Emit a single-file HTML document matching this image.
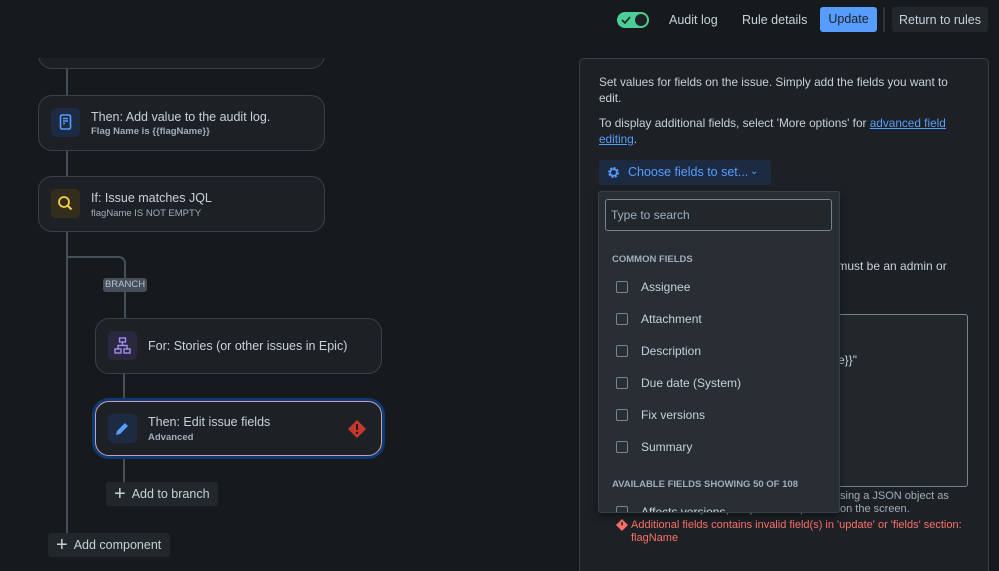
<!DOCTYPE html>
<html><head><style>
*{box-sizing:border-box;margin:0;padding:0}
html,body{width:999px;height:571px;overflow:hidden}
body{background:#161a1d;font-family:"Liberation Sans",sans-serif;color:#c7d1db;position:relative}
.a{position:absolute}
.card{position:absolute;background:#1d2125;border:1px solid #38414a;border-radius:14px}
.ic{position:absolute;left:12px;top:12px;width:29px;height:29px;border-radius:5px}
.t{position:absolute;left:52px;font-size:12.5px;color:#c7d1db;white-space:nowrap}
.s{position:absolute;left:52px;font-size:9.5px;color:#9fadbc;font-weight:bold;white-space:nowrap}
.vl{position:absolute;width:2px;background:#454f59}
.btn{position:absolute;background:#22272b;border-radius:3px;font-size:12.5px;color:#c7d1db;display:flex;align-items:center}
.item{position:absolute;left:17px;font-size:12px;color:#c7d1db;display:flex;align-items:center}
.cb{width:12px;height:12px;border:1.5px solid #738496;border-radius:2px;margin-right:13px}
.p{position:absolute;font-size:12px;color:#c7d1db;white-space:nowrap}
</style></head><body>
<div class="vl" style="left:66px;top:60px;height:485px"></div>
<div class="card" style="left:38px;top:20px;width:287px;height:49px"></div>
<div class="a" style="left:0;top:0;width:560px;height:58px;background:#161a1d"></div>
<div class="card" style="left:38px;top:95px;width:287px;height:56px">
<div class="ic" style="background:#1c2b41"><svg width="29" height="29" viewBox="0 0 29 29"><rect x="9.5" y="7" width="10" height="14" rx="1.5" fill="none" stroke="#579dff" stroke-width="1.6"/><path d="M12 10.5h5M12 13h5M12 15.5h2" stroke="#579dff" stroke-width="1.4"/></svg></div>
<div class="t" style="top:14px">Then: Add value to the audit log.</div>
<div class="s" style="top:30px">Flag Name is {{flagName}}</div></div>
<div class="card" style="left:38px;top:176px;width:287px;height:56px">
<div class="ic" style="background:#332e1b"><svg width="29" height="29" viewBox="0 0 29 29"><circle cx="13" cy="13" r="5" fill="none" stroke="#f5cd47" stroke-width="1.8"/><path d="M16.5 16.5l4 4" stroke="#f5cd47" stroke-width="2"/></svg></div>
<div class="t" style="top:14px">If: Issue matches JQL</div>
<div class="s" style="top:31px;font-weight:normal">flagName IS NOT EMPTY</div></div>
<svg class="a" style="left:66px;top:255px" width="62" height="65"><path d="M1 2H52Q59 2 59 9V65" fill="none" stroke="#454f59" stroke-width="2"/></svg>
<div class="a" style="left:103px;top:278px;width:44px;height:14px;background:#454f59;border-radius:3px;font-size:9.5px;color:#b6c2cf;text-align:center;line-height:14px">BRANCH</div>
<div class="vl" style="left:123px;top:370px;height:115px"></div>
<div class="card" style="left:95px;top:318px;width:287px;height:56px">
<div class="ic" style="background:#2b273f"><svg width="29" height="29" viewBox="0 0 29 29"><g fill="none" stroke="#9f8fef" stroke-width="1.4"><rect x="11.5" y="7" width="6" height="4"/><rect x="7" y="18" width="6" height="4"/><rect x="16" y="18" width="6" height="4"/><path d="M14.5 11v3.5M10 18v-3.5h9V18"/></g></svg></div>
<div class="t" style="top:20px">For: Stories (or other issues in Epic)</div></div>
<div class="card" style="left:95px;top:401px;width:287px;height:55px;border:1px solid #c9a0b0;box-shadow:0 0 0 3px #0c3a75">
<div class="ic" style="background:#1c2b41"><svg width="29" height="29" viewBox="0 0 29 29"><path d="M8 21l1-4 8-8 3 3-8 8z" fill="#579dff"/></svg></div>
<div class="t" style="top:13px">Then: Edit issue fields</div>
<div class="s" style="top:30px">Advanced</div>
<svg class="a" style="left:251px;top:17px" width="20" height="20" viewBox="0 0 20 20"><path d="M10 1l9 9-9 9-9-9z" fill="#c9372c"/><path d="M10 5v6" stroke="#1d2125" stroke-width="2"/><circle cx="10" cy="14" r="1.2" fill="#1d2125"/></svg></div>
<div class="btn" style="left:106px;top:482px;width:112px;height:24px;padding-left:8px"><span style="font-size:20px;margin-right:6px;font-weight:200">+</span>Add to branch</div>
<div class="btn" style="left:48px;top:533px;width:122px;height:24px;padding-left:8px"><span style="font-size:20px;margin-right:6px;font-weight:200">+</span>Add component</div>

<div class="a" style="left:617px;top:12px;width:32px;height:16px;background:#4bce97;border-radius:8px"><div class="a" style="left:18px;top:2px;width:12px;height:12px;border-radius:6px;background:#1d2125"></div><svg class="a" style="left:4px;top:3px" width="10" height="10"><path d="M1 5l3 3 5-6" stroke="#1d2125" stroke-width="1.6" fill="none"/></svg></div>
<div class="p" style="left:669px;top:13px;font-size:12.5px">Audit log</div>
<div class="p" style="left:742px;top:13px;font-size:12.5px">Rule details</div>
<div class="a" style="left:820px;top:7px;width:57px;height:25px;background:#579dff;border-radius:3px;color:#1d2125;font-size:12.5px;text-align:center;line-height:25px">Update</div>
<div class="a" style="left:883px;top:7px;width:2px;height:25px;background:#2c333a"></div>
<div class="btn" style="left:892px;top:7px;width:96px;height:25px;justify-content:center">Return to rules</div>

<div class="a" style="left:579px;top:58px;width:410px;height:530px;background:#1d2125;border:1px solid #38414a;border-radius:5px"></div>
<div class="p" style="left:599px;top:75px;font-size:11.8px">Set values for fields on the issue. Simply add the fields you want to</div>
<div class="p" style="left:599px;top:91px;font-size:11.8px">edit.</div>
<div class="p" style="left:599px;top:116px;font-size:11.8px">To display additional fields, select 'More options' for <span style="color:#579dff;text-decoration:underline">advanced field</span></div>
<div class="p" style="left:599px;top:132px;font-size:11.8px"><span style="color:#579dff;text-decoration:underline">editing</span>.</div>
<div class="a" style="left:599px;top:160px;width:172px;height:25px;background:#1c2b41;border-radius:3px;color:#579dff;font-size:12.5px;line-height:25px;padding-left:29px">Choose fields to set...<span style="position:absolute;left:151px;top:-1px;font-size:10px">&#8964;</span>
<svg class="a" style="left:7px;top:5px" width="15" height="15" viewBox="0 0 16 16"><circle cx="8" cy="8" r="4.5" fill="none" stroke="#579dff" stroke-width="2.5" stroke-dasharray="2.2 1.3"/><circle cx="8" cy="8" r="3.5" fill="none" stroke="#579dff" stroke-width="1.6"/></svg></div>
<div class="p" style="left:830px;top:259px">r must be an admin or</div>
<div class="a" style="left:838px;top:314px;width:130px;height:173px;border:1px solid #738496;border-left:none;border-radius:0 3px 3px 0;background:#22272b"></div>
<div class="p" style="left:838px;top:353px">e}}"</div>
<div class="p" style="left:840px;top:490px;font-size:11px;color:#9fadbc">sing a JSON object as</div>
<div class="p" style="left:700px;top:503px;font-size:11px;color:#9fadbc">you specify must be present on the screen.</div>
<svg class="a" style="left:616px;top:519px" width="12" height="12"><path d="M6 0l6 6-6 6-6-6z" fill="#f87168"/><path d="M6 3v3.5" stroke="#1d2125" stroke-width="1.4"/></svg>
<div class="p" style="left:631px;top:519px;font-size:11px;color:#f87168">Additional fields contains invalid field(s) in 'update' or 'fields' section:</div>
<div class="p" style="left:631px;top:532px;font-size:11px;color:#f87168">flagName</div>

<div class="a" style="left:598px;top:191px;width:242px;height:322px;background:#282e33;border:1px solid #38414a;border-radius:3px;overflow:hidden;box-shadow:0 4px 8px rgba(0,0,0,.4)">
<div class="a" style="left:6px;top:7px;width:227px;height:32px;border:1.5px solid #738496;border-radius:3px;background:#22272b;font-size:12px;color:#9fadbc;padding:8px 0 0 5px">Type to search</div>
<div class="a" style="left:13px;top:62px;font-size:9.5px;font-weight:bold;color:#9fadbc">COMMON FIELDS</div>
<div class="item" style="top:88px"><div class="cb"></div>Assignee</div>
<div class="item" style="top:120px"><div class="cb"></div>Attachment</div>
<div class="item" style="top:152px"><div class="cb"></div>Description</div>
<div class="item" style="top:184px"><div class="cb"></div>Due date (System)</div>
<div class="item" style="top:216px"><div class="cb"></div>Fix versions</div>
<div class="item" style="top:248px"><div class="cb"></div>Summary</div>
<div class="a" style="left:13px;top:287px;font-size:9.5px;font-weight:bold;color:#9fadbc">AVAILABLE FIELDS SHOWING 50 OF 108</div>
<div class="item" style="top:313px"><div class="cb"></div>Affects versions</div>
</div>
</body></html>
